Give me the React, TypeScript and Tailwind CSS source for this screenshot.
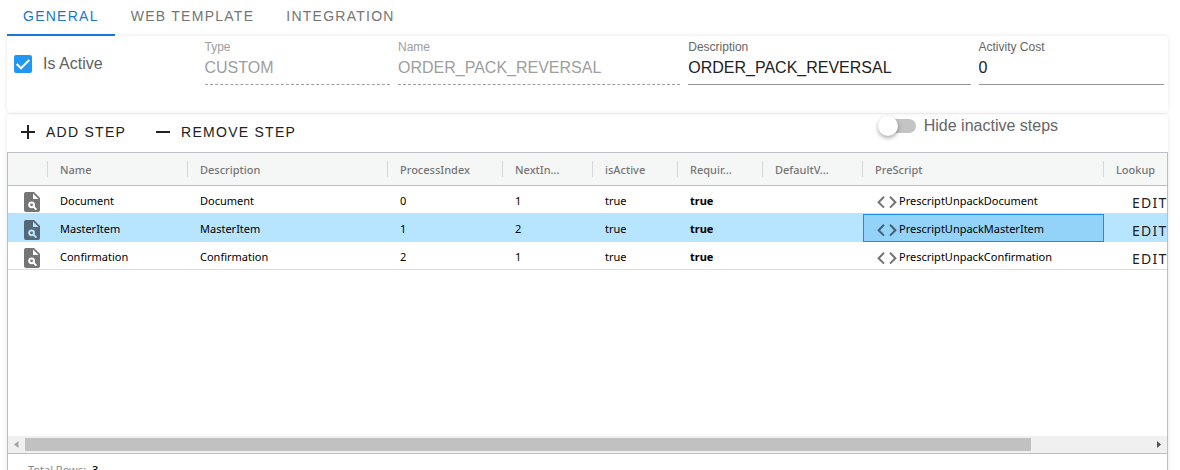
import { useState, type ReactNode } from "react";
import clsx from "clsx";

type Step = {
  name: string;
  description: string;
  processIndex: number;
  nextIndex: number;
  isActive: boolean;
  required: boolean;
  defaultValue: string;
  preScript: string;
};

const STEPS: Step[] = [
  { name: "Document", description: "Document", processIndex: 0, nextIndex: 1, isActive: true, required: true, defaultValue: "", preScript: "PrescriptUnpackDocument" },
  { name: "MasterItem", description: "MasterItem", processIndex: 1, nextIndex: 2, isActive: true, required: true, defaultValue: "", preScript: "PrescriptUnpackMasterItem" },
  { name: "Confirmation", description: "Confirmation", processIndex: 2, nextIndex: 1, isActive: true, required: true, defaultValue: "", preScript: "PrescriptUnpackConfirmation" },
];

const HEADERS = ["", "Name", "Description", "ProcessIndex", "NextIn...", "isActive", "Requir...", "DefaultV...", "PreScript", "Lookup"];
const TABS = ["GENERAL", "WEB TEMPLATE", "INTEGRATION"];

function PageSearchIcon({ selected }: { selected: boolean }) {
  const cut = selected ? "fill-[#b7e4ff]" : "fill-white";
  const line = selected ? "stroke-[#b7e4ff]" : "stroke-white";
  return (
    <svg viewBox="0 0 24 24" className="size-6">
      <path className={selected ? "fill-[#546975]" : "fill-[#757575]"} d="M6 2C4.9 2 4 2.9 4 4V20A2 2 0 0 0 6 22H18A2 2 0 0 0 20 20V8L14 2Z" />
      <path className={cut} d="M13 3.5V9H18.5Z" />
      <circle className={line} cx="11.6" cy="14.8" r="2.4" fill="none" strokeWidth="2" />
      <path className={line} d="M13.4 16.6L16.4 19.6" fill="none" strokeWidth="2" />
    </svg>
  );
}

function CodeIcon() {
  return (
    <svg viewBox="0 0 24 24" className="size-6 shrink-0" fill="none" strokeWidth="2">
      <path className="stroke-black/55" d="M9 6.8L3.6 12.2L9 17.6M15 6.8L20.4 12.2L15 17.6" />
    </svg>
  );
}

function Field({ id, label, value, disabled, className }: { id: string; label: string; value: string; disabled?: boolean; className: string }) {
  return (
    <div className={clsx("px-1 pt-1", className)}>
      <label htmlFor={id} className={clsx("block text-xs leading-[14px]", disabled ? "text-[#9e9e9e]" : "text-[#666666]")}>
        {label}
      </label>
      <input
        id={id}
        defaultValue={value}
        disabled={disabled}
        className={clsx(
          "block h-[31px] w-full border-b bg-transparent pb-0.5 text-base outline-none",
          disabled ? "border-dashed border-[#9e9e9e] text-[#9e9e9e]" : "border-[#949494] text-[#212121]",
        )}
      />
    </div>
  );
}

function ToolButton({ path, children }: { path: string; children: ReactNode }) {
  return (
    <button type="button" className="flex h-9 items-center gap-1.5 text-sm tracking-[0.09em] text-[#212121]">
      <svg viewBox="0 0 24 24" className="size-6" fill="none">
        <path className="stroke-[#212121]" strokeWidth="2" d={path} />
      </svg>
      {children}
    </button>
  );
}

function Cell({ children, className }: { children?: ReactNode; className?: string }) {
  return <td className={clsx("overflow-hidden border-b border-[#d9dcde] p-0 pl-3 whitespace-nowrap", className)}>{children}</td>;
}

export default function App() {
  const [tab, setTab] = useState(0);
  const [selected, setSelected] = useState(1);

  return (
    <div className="h-screen overflow-hidden bg-white pr-3 pl-[7px] font-['Liberation_Sans',Arial,sans-serif]">
      <nav className="flex h-9">
        {TABS.map((name, i) => (
          <button
            key={name}
            type="button"
            onClick={() => setTab(i)}
            className={clsx(
              "border-b-2 px-4 pt-px pb-1 text-sm tracking-[0.09em]",
              i === tab ? "border-[#1976d2] text-[#1976d2]" : "border-transparent text-[#757575]",
            )}
          >
            {name}
          </button>
        ))}
      </nav>

      <section className="grid h-[77px] grid-cols-12 rounded shadow-[0_0_4px_rgba(0,0,0,0.1)]">
        <div className="col-span-2 flex h-14 items-center gap-[11px] pl-[7px]">
          <span className="relative size-[18px]">
            <input id="is-active" type="checkbox" defaultChecked className="peer block size-[18px] appearance-none rounded-xs border-2 border-[#757575] checked:border-[#2196f3] checked:bg-[#2196f3]" />
            <svg viewBox="0 0 18 18" className="pointer-events-none absolute inset-0 hidden size-[18px] peer-checked:block" fill="none">
              <path d="M2.7 9L7 13.3L15.3 5" stroke="white" strokeWidth="2" />
            </svg>
          </span>
          <label htmlFor="is-active" className="text-base text-[#616161]">
            Is Active
          </label>
        </div>
        <Field id="type" label="Type" value="CUSTOM" disabled className="col-span-2" />
        <Field id="name" label="Name" value="ORDER_PACK_REVERSAL" disabled className="col-span-3" />
        <Field id="description" label="Description" value="ORDER_PACK_REVERSAL" className="col-span-3" />
        <Field id="cost" label="Activity Cost" value="0" className="col-span-2" />
      </section>

      <section className="mt-px rounded shadow-[0_0_4px_rgba(0,0,0,0.1)]">
        <div className="grid h-[38px] grid-cols-12">
          <div className="col-span-9 flex gap-[25px] pl-[9px]">
            <ToolButton path="M12 5V19M5 12H19">ADD STEP</ToolButton>
            <ToolButton path="M5 12H19">REMOVE STEP</ToolButton>
          </div>
          <label className="col-span-3 flex h-6 items-center gap-2">
            <span className="relative flex h-5 w-[38px] items-center">
              <input type="checkbox" role="switch" className="peer ml-0.5 h-3.5 w-9 appearance-none rounded-full bg-[#c4c4c4] checked:bg-[#90caf9]" />
              <span className="pointer-events-none absolute top-0 left-0 size-5 rounded-full bg-white shadow-[0_2px_4px_rgba(0,0,0,0.35)] peer-checked:left-[18px]" />
            </span>
            <span className="text-base text-[#666666]">Hide inactive steps</span>
          </label>
        </div>

        <div className="border border-[#babfc3] font-['Noto_Sans',sans-serif] text-[11px]">
          <div className="h-[283px] overflow-hidden">
            <table className="w-[1296px] table-fixed border-separate border-spacing-0">
              <colgroup>
                <col className="w-10" />
                <col className="w-[140px]" />
                <col className="w-[200px]" />
                <col className="w-[115px]" />
                <col className="w-[90px]" />
                <col className="w-[85px]" />
                <col className="w-[85px]" />
                <col className="w-[100px]" />
                <col className="w-[241px]" />
                <col />
              </colgroup>
              <thead>
                <tr className="h-[33px] bg-[#f5f7f7] text-left text-[#757575]">
                  {HEADERS.map((title, i) => (
                    <th key={i} scope="col" className="border-b border-[#babfc3] p-0 font-medium">
                      <div className="h-4 border-r border-[#d4d8da] pl-3 leading-[18px]">{title}</div>
                    </th>
                  ))}
                </tr>
              </thead>
              <tbody>
                {STEPS.map((step, i) => {
                  const active = i === selected;
                  return (
                    <tr key={step.name} onClick={() => setSelected(i)} className={active ? "bg-[#b7e4ff]" : "bg-white"}>
                      <Cell>
                        <div className="flex h-[27px] items-start pt-1">
                          <PageSearchIcon selected={active} />
                        </div>
                      </Cell>
                      <Cell className="pt-1">{step.name}</Cell>
                      <Cell className="pt-1">{step.description}</Cell>
                      <Cell className="pt-1">{step.processIndex}</Cell>
                      <Cell className="pt-1">{step.nextIndex}</Cell>
                      <Cell className="pt-1">{String(step.isActive)}</Cell>
                      <Cell className="pt-1 font-bold">{String(step.required)}</Cell>
                      <Cell className="pt-1">{step.defaultValue}</Cell>
                      <Cell className={active ? "bg-[#93d3fa] outline outline-1 -outline-offset-1 outline-[#1a8ee5]" : ""}>
                        <div className="flex h-[27px] items-center pt-1">
                          <CodeIcon />
                          {step.preScript}
                        </div>
                      </Cell>
                      <Cell>
                        <button type="button" className="block h-[27px] pt-1.5 pl-4 text-sm leading-5 tracking-[0.09em] text-[#212121]">
                          EDIT
                        </button>
                      </Cell>
                    </tr>
                  );
                })}
              </tbody>
            </table>
          </div>

          <div className="flex h-[17px] items-center bg-[#f0f0f0]">
            <svg viewBox="0 0 17 17" className="size-[17px]">
              <path fill="#a3a3a3" d="M10.5 5V12L6 8.5Z" />
            </svg>
            <div className="flex-1">
              <div className="h-[13px] w-[89.4%] bg-[#c1c1c1]" />
            </div>
            <svg viewBox="0 0 17 17" className="size-[17px]">
              <path fill="#505050" d="M7 5V12L11 8.5Z" />
            </svg>
          </div>

          <footer className="flex h-10 gap-1.5 border-t border-[#babfc3] pt-2 pl-5 leading-4">
            <span className="text-[#8a8a8a]">Total Rows:</span>
            <span className="font-medium">3</span>
          </footer>
        </div>
      </section>
    </div>
  );
}
